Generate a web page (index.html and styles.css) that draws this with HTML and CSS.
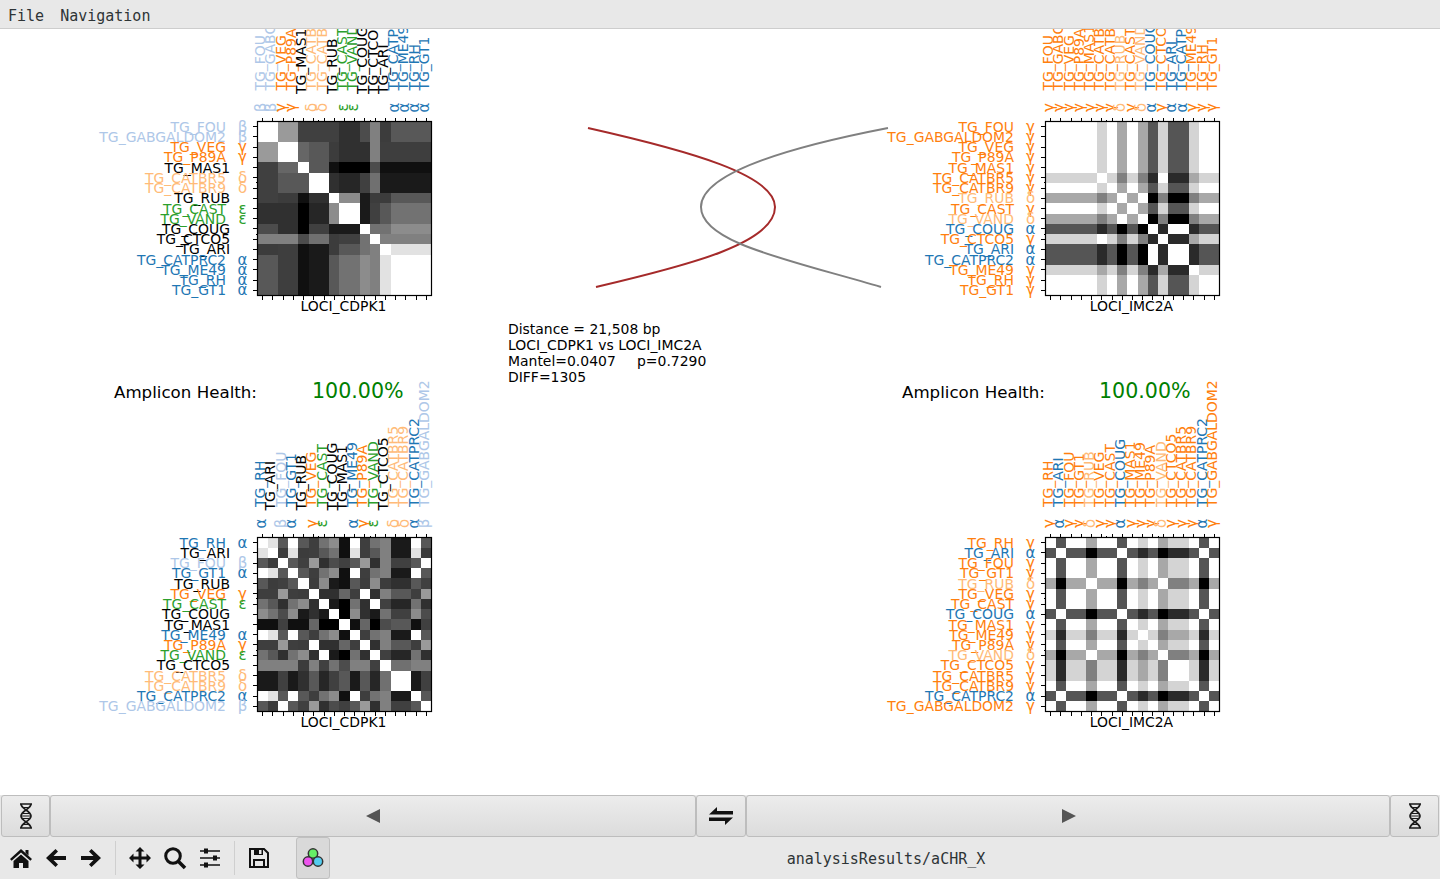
FILE: index.html
```html
<!DOCTYPE html>
<html lang="en">
<head>
    <meta charset="UTF-8">
    <title>analysisResults/aCHR_X</title>
    <link rel="stylesheet" href="styles.css">
</head>
<body>
    <div class="menubar">
        <span class="menu-item">File</span>
        <span class="menu-item">Navigation</span>
    </div>

    <svg id="figure" class="figure" viewBox="0 29 1440 766">
        <path class="link link-red" d="M588 128 C690 151 775 175 775 207 C775 243 690 265 596 287"/>
        <path class="link link-gray" d="M888 128 C795 146 701 172 701 207 C701 243 790 260 881 287"/>
        <text class="info" x="508" y="334">Distance = 21,508 bp</text>
        <text class="info" x="508" y="350">LOCI_CDPK1 vs LOCI_IMC2A</text>
        <text class="info" x="508" y="366">Mantel=0.0407</text>
        <text class="info" x="637" y="366">p=0.7290</text>
        <text class="info" x="508" y="382">DIFF=1305</text>
        <text class="health" x="114" y="398">Amplicon Health:</text>
        <text class="health-value" x="312" y="398">100.00%</text>
        <text class="health" x="902" y="398">Amplicon Health:</text>
        <text class="health-value" x="1099" y="398">100.00%</text>
    </svg>

    <div class="nav-row">
        <button class="nav-btn">
            <svg class="dna" viewBox="0 0 12 26"><path d="M0 1h12M0 25h12M1 1c0 5 10 7 10 12S1 20 1 25M11 1c0 5-10 7-10 12s10 7 10 12"/><path class="dna-rung" d="M3 4.500h6M2.500 10.500h7M1.500 13h9M2.500 15.500h7M3 21.500h6"/></svg>
        </button>
        <button class="nav-btn">
            <svg class="tri" viewBox="0 0 16 16"><path d="M15 1v14L1 8z"/></svg>
        </button>
        <button class="nav-btn">
            <svg class="swap" viewBox="0 0 26 20"><path d="M9 1v4h16v3.500H1zM17 19v-4H1v-3.500h24z"/></svg>
        </button>
        <button class="nav-btn">
            <svg class="tri tri-next" viewBox="0 0 16 16"><path d="M1 1v14l14-7z"/></svg>
        </button>
        <button class="nav-btn">
            <svg class="dna" viewBox="0 0 12 26"><path d="M0 1h12M0 25h12M1 1c0 5 10 7 10 12S1 20 1 25M11 1c0 5-10 7-10 12s10 7 10 12"/><path class="dna-rung" d="M3 4.500h6M2.500 10.500h7M1.500 13h9M2.500 15.500h7M3 21.500h6"/></svg>
        </button>
    </div>

    <div class="toolbar">
        <div class="tool-group">
            <span class="tool"><svg viewBox="0 0 24 24"><path d="M12 3 23 13l-1.600 1.800L12 6.500 2.600 14.800 1 13zM16.500 4h3v5.500l-3-2.700zM4.500 15 12 8.500 19.500 15v7H14v-5h-4v5H4.500z"/></svg></span>
            <span class="tool"><svg viewBox="0 0 24 24"><path d="M11.500 3 14 5.500 9.500 10H22v4H9.500l4.500 4.500-2.500 2.500L2 12z"/></svg></span>
            <span class="tool"><svg viewBox="0 0 24 24"><path d="M12.500 3 10 5.500 14.500 10H2v4h12.500L10 18.500l2.500 2.500L22 12z"/></svg></span>
        </div>
        <div class="tool-sep"></div>
        <div class="tool-group">
            <span class="tool"><svg viewBox="0 0 24 24"><path d="M12 1l4.500 4.500h-3v5h5v-3L23 12l-4.500 4.500v-3h-5v5h3L12 23l-4.500-4.500h3v-5h-5v3L1 12l4.500-4.500v3h5v-5h-3z"/></svg></span>
            <span class="tool"><svg viewBox="0 0 24 24"><circle class="tool-line" cx="10" cy="10" r="7.300"/><path class="tool-line tool-line-bold" d="m15.500 15.500 6.500 6.500"/></svg></span>
            <span class="tool"><svg viewBox="0 0 24 24"><path class="tool-line tool-line-thin" d="M2 5h20M2 12h20M2 19h20"/><path d="M6 2.500h4v5H6zM15 9.500h4v5h-4zM6 16.500h4v5H6z"/></svg></span>
        </div>
        <div class="tool-sep"></div>
        <div class="tool-group">
            <span class="tool"><svg viewBox="0 0 24 24"><path class="tool-line tool-line-mid" d="M3 3h14l4 4v14H3z"/><path d="M7 3h9v6H7z"/><path class="tool-hole" d="M12 4h2.500v4H12z"/><path d="M6 13h12v8H6z"/><path class="tool-hole" d="M8 15h8v5H8z"/></svg></span>
        </div>
        <div class="tool-active">
            <svg viewBox="0 0 24 24"><circle class="dot dot-green" cx="12" cy="7.500" r="4.700"/><circle class="dot dot-pink" cx="7" cy="15.500" r="4.700"/><circle class="dot dot-blue" cx="17" cy="15.500" r="4.700"/></svg>
        </div>
        <div class="status">analysisResults/aCHR_X</div>
    </div>

    <script src="plot.js"></script>
</body>
</html>
```

FILE: styles.css
```css
* {
    box-sizing: border-box;
}
body {
    margin: 0;
    width: 1440px;
    height: 879px;
    overflow: hidden;
    display: flex;
    flex-direction: column;
    background-color: #fff;
    font-family: "DejaVu Sans Mono", monospace;
    font-size: 15px;
    color: #2e3436;
}
.menubar {
    height: 29px;
    display: flex;
    align-items: center;
    gap: 16px;
    padding: 3px 8px 0;
    background-color: #e8e8e8;
    border-bottom: 1px solid #cdcdcd;
}
.figure {
    display: block;
    width: 1440px;
    height: 766px;
    background-color: #fff;
    font-family: "DejaVu Sans", sans-serif;
}
.link {
    fill: none;
    stroke-width: 2;
}
.link-red {
    stroke: #a52a2a;
}
.link-gray {
    stroke: #808080;
}
.info, .tick-label {
    font-size: 13.95px;
    fill: #000;
}
.symbol {
    font-size: 15px;
}
.health {
    font-size: 16.67px;
    fill: #000;
}
.health-value {
    font-size: 20.6px;
    fill: #008000;
}
.frame {
    fill: none;
    stroke: #000;
    stroke-width: 1.2;
}
.tick {
    stroke: #000;
    stroke-width: 1;
    shape-rendering: crispEdges;
}
.c-alpha {
    fill: #1f77b4;
}
.c-beta {
    fill: #aec7e8;
}
.c-gamma {
    fill: #ff7f0e;
}
.c-delta {
    fill: #ffbb78;
}
.c-epsilon {
    fill: #2ca02c;
}
.nav-row {
    height: 42px;
    display: grid;
    grid-template-columns: 49px 646px 50px 644px 49px;
    padding: 0 1px;
    background-color: #e8e8e8;
}
.nav-btn {
    height: 42px;
    padding: 0;
    display: flex;
    align-items: center;
    justify-content: center;
    background: linear-gradient(#ececec, #dcdcdc);
    border: 1px solid #bdbdbd;
    border-radius: 3px;
}
.dna {
    width: 12px;
    height: 26px;
    fill: none;
    stroke: #1a1a1a;
    stroke-width: 1.700;
}
.dna-rung {
    stroke-width: 1.100;
}
.tri {
    width: 16px;
    height: 16px;
    fill: #555;
}
.tri-next {
    margin-left: 2px;
}
.swap {
    width: 26px;
    height: 20px;
    fill: #111;
}
.toolbar {
    height: 42px;
    display: flex;
    align-items: center;
    padding-left: 3.5px;
    background-color: #e8e8e8;
}
.tool-group {
    display: flex;
    align-items: center;
}
.tool {
    width: 35px;
    height: 42px;
    display: flex;
    align-items: center;
    justify-content: center;
}
.tool svg {
    width: 24px;
    height: 24px;
    fill: #111;
}
.tool-line {
    fill: none;
    stroke: #111;
    stroke-width: 3;
}
.tool-line-bold {
    stroke-width: 3.500;
}
.tool-line-thin {
    stroke-width: 1.600;
}
.tool-line-mid {
    stroke-width: 2;
}
.tool-hole {
    fill: #e8e8e8;
}
.tool-sep {
    width: 1px;
    height: 34px;
    margin: 0 6.5px;
    background-color: #cfcfcf;
}
.tool-active {
    width: 34px;
    height: 42px;
    margin-left: 19.5px;
    display: flex;
    align-items: center;
    justify-content: center;
    background-color: #d9d9d9;
    border: 1px solid #c0c0c0;
    border-radius: 3px;
}
.tool-active svg {
    width: 24px;
    height: 24px;
}
.dot {
    stroke: #333;
    stroke-width: 1.500;
}
.dot-green {
    fill: #66ee66;
}
.dot-pink {
    fill: #ee55ee;
}
.dot-blue {
    fill: #55ccee;
}
.status {
    width: 1112px;
    padding: 2px 0 0 2px;
    text-align: center;
}
```

FILE: plot.js
```js
const SVG_NS = 'http://www.w3.org/2000/svg';
const figure = document.getElementById('figure');

const topOrder = ['FOU', 'GABGALDOM2', 'VEG', 'P89A', 'MAS1', 'CATBR5', 'CATBR9', 'RUB', 'CAST', 'VAND', 'COUG', 'CTCO5', 'ARI', 'CATPRC2', 'ME49', 'RH', 'GT1'];
const bottomOrder = ['RH', 'ARI', 'FOU', 'GT1', 'RUB', 'VEG', 'CAST', 'COUG', 'MAS1', 'ME49', 'P89A', 'VAND', 'CTCO5', 'CATBR5', 'CATBR9', 'CATPRC2', 'GABGALDOM2'];

// each locus: strain -> [cluster in the grey table, allele type]
const cdpk1 = {
    name: 'LOCI_CDPK1',
    groups: {
        FOU: [0, 'beta'], GABGALDOM2: [0, 'beta'], VEG: [1, 'gamma'], P89A: [1, 'gamma'], MAS1: [2, ''],
        CATBR5: [3, 'delta'], CATBR9: [3, 'delta'], RUB: [4, ''], CAST: [5, 'epsilon'], VAND: [5, 'epsilon'],
        COUG: [6, ''], CTCO5: [7, ''], ARI: [8, ''], CATPRC2: [9, 'alpha'], ME49: [9, 'alpha'], RH: [9, 'alpha'], GT1: [9, 'alpha']
    },
    greys: [
        ['ff', '9a', '40', '40', '40', '30', '4c', '80', '3c', '58'],
        ['9a', 'ff', '66', '58', '3c', '30', '30', '80', '3e', '3e'],
        ['40', '66', 'ff', '58', '10', '00', '00', '4c', '10', '10'],
        ['40', '58', '58', 'ff', '30', '26', '40', '70', '1a', '1a'],
        ['40', '3c', '10', '30', 'ff', '8c', '1a', '3c', '3c', '58'],
        ['30', '30', '00', '26', '8c', 'ff', '1a', '40', '58', '72'],
        ['4c', '30', '00', '40', '1a', '1a', 'ff', '72', '72', '8c'],
        ['80', '80', '4c', '70', '3c', '40', '72', 'ff', '80', '80'],
        ['3c', '3e', '10', '1a', '3c', '58', '72', '80', 'ff', 'e2'],
        ['58', '3e', '10', '1a', '58', '72', '8c', '80', 'e2', 'ff']
    ]
};

const imc2a = {
    name: 'LOCI_IMC2A',
    groups: {
        FOU: [0, 'gamma'], GABGALDOM2: [0, 'gamma'], VEG: [0, 'gamma'], P89A: [0, 'gamma'], MAS1: [0, 'gamma'],
        CATBR9: [0, 'gamma'], CAST: [0, 'gamma'], RH: [0, 'gamma'], GT1: [0, 'gamma'],
        CATBR5: [1, 'gamma'], CTCO5: [1, 'gamma'], ME49: [2, 'gamma'], RUB: [3, 'delta'], VAND: [3, 'delta'],
        COUG: [4, 'alpha'], ARI: [4, 'alpha'], CATPRC2: [4, 'alpha']
    },
    greys: [
        ['ff', 'd4', 'd4', 'a8', '55'],
        ['d4', 'ff', 'a8', '80', '2a'],
        ['d4', 'a8', 'ff', '80', '2a'],
        ['a8', '80', '80', 'ff', '00'],
        ['55', '2a', '2a', '00', 'ff']
    ]
};

const symbols = { alpha: 'α', beta: 'β', gamma: 'γ', delta: 'δ', epsilon: 'ε' };

const SIZE = 174;
const CELL = SIZE / 17;

function add(tag, attrs, text) {
    const el = document.createElementNS(SVG_NS, tag);
    for (const key in attrs) {
        el.setAttribute(key, attrs[key]);
    }
    if (text) {
        el.textContent = text;
    }
    figure.appendChild(el);
    return el;
}

function tick(x1, y1, x2, y2) {
    add('line', { class: 'tick', x1: x1, y1: y1, x2: x2, y2: y2 });
}

function drawPanel(locus, order, left, top) {
    const bottom = top + SIZE;

    order.forEach(function(rowName, r) {
        order.forEach(function(colName, c) {
            const grey = locus.greys[locus.groups[rowName][0]][locus.groups[colName][0]];
            add('rect', {
                x: left + c * CELL,
                y: top + r * CELL,
                width: CELL + 0.3,
                height: CELL + 0.3,
                fill: '#' + grey + grey + grey,
                'shape-rendering': 'crispEdges'
            });
        });
    });
    add('rect', { class: 'frame', x: left, y: top, width: SIZE, height: SIZE });

    order.forEach(function(name, i) {
        const type = locus.groups[name][1];
        const mid = i * CELL + CELL / 2;
        const cls = 'tick-label' + (type ? ' c-' + type : '');
        // unlabelled strains sit a little closer to the axes
        const shift = type ? 0 : 4;

        tick(left + mid, top - 4, left + mid, top);
        tick(left + mid, bottom, left + mid, bottom + 4);
        tick(left - 5, top + mid, left, top + mid);

        add('text', { class: cls, x: left - 31.500 + shift, y: top + mid + 5, 'text-anchor': 'end' }, 'TG_' + name);
        const ty = top - 31 - (top > 400 ? -0.500 : 0) + shift * 0.9;
        const tx = left + mid + 2.500;
        add('text', { class: cls, 'text-anchor': 'start', transform: 'translate(' + tx + ' ' + ty + ') rotate(-90)' }, 'TG_' + name);

        if (type) {
            add('text', { class: cls + ' symbol', x: left - 15, y: top + mid + 5, 'text-anchor': 'middle' }, symbols[type]);
            add('text', { class: cls + ' symbol', 'text-anchor': 'middle', transform: 'translate(' + (tx + 0.500) + ' ' + (top - 14) + ') rotate(-90)' }, symbols[type]);
        }
    });

    [6, 11].forEach(function(n) {
        tick(left + n * CELL, top - 2, left + n * CELL, top);
        tick(left - 2, top + n * CELL, left, top + n * CELL);
    });

    add('text', { class: 'tick-label', x: left + SIZE / 2 - 1, y: bottom + 15, 'text-anchor': 'middle' }, locus.name);
}

drawPanel(cdpk1, topOrder, 257.500, 121.500);
drawPanel(imc2a, topOrder, 1045.500, 121.500);
drawPanel(cdpk1, bottomOrder, 257.500, 537.500);
drawPanel(imc2a, bottomOrder, 1045.500, 537.500);
```
